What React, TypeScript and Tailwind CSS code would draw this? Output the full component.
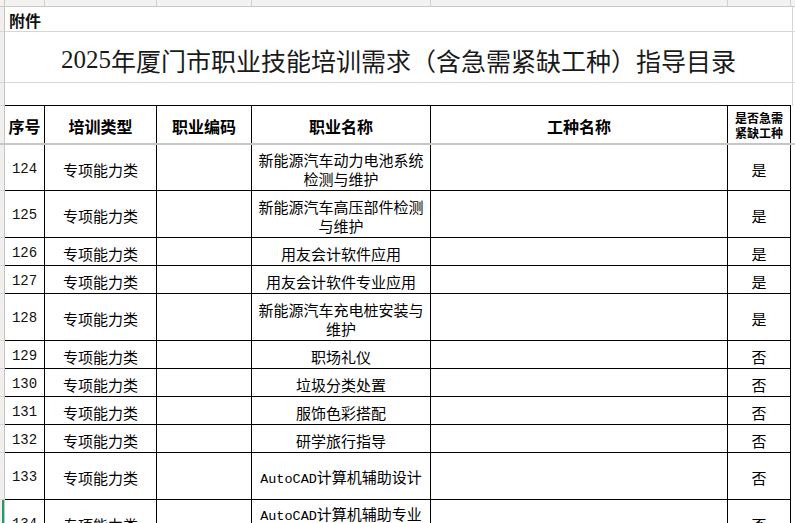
import React from "react";

const COLS = ["w-[40px]", "w-[112px]", "w-[95px]", "w-[179px]", "w-[297px]", "w-[63px]"];
const LETTERS = ["A", "B", "C", "D", "E", "F"];

interface Item {
  no: number;
  name: string[];
  urgent: string;
  h: string;
  selected?: boolean;
}

const items: Item[] = [
  { no: 124, name: ["新能源汽车动力电池系统", "检测与维护"], urgent: "是", h: "h-[46px]" },
  { no: 125, name: ["新能源汽车高压部件检测", "与维护"], urgent: "是", h: "h-[47px]" },
  { no: 126, name: ["用友会计软件应用"], urgent: "是", h: "h-[28px]" },
  { no: 127, name: ["用友会计软件专业应用"], urgent: "是", h: "h-[28px]" },
  { no: 128, name: ["新能源汽车充电桩安装与", "维护"], urgent: "是", h: "h-[47px]" },
  { no: 129, name: ["职场礼仪"], urgent: "否", h: "h-[28px]" },
  { no: 130, name: ["垃圾分类处置"], urgent: "否", h: "h-[28px]" },
  { no: 131, name: ["服饰色彩搭配"], urgent: "否", h: "h-[28px]" },
  { no: 132, name: ["研学旅行指导"], urgent: "否", h: "h-[28px]" },
  { no: 133, name: ["AutoCAD计算机辅助设计"], urgent: "否", h: "h-[47px]" },
  { no: 134, name: ["AutoCAD计算机辅助专业", "设计"], urgent: "否", h: "h-[47px]", selected: true },
];

// latin runs get the narrow mono face, like the sheet's half-width glyphs
function Mixed({ text }: { text: string }) {
  const parts = text.split(/([A-Za-z0-9]+)/).filter(Boolean);
  return (
    <>
      {parts.map((p, i) =>
        /^[A-Za-z0-9]+$/.test(p) ? (
          <span key={i} className="font-['Liberation_Mono',monospace] text-[13.5px]">
            {p}
          </span>
        ) : (
          <span key={i}>{p}</span>
        )
      )}
    </>
  );
}

function Strip({ selected, className = "" }: { selected?: boolean; className?: string }) {
  return (
    <div
      className={`flex w-[5px] shrink-0 justify-end border-r border-[#c4c4c4] bg-[#f1f0ee] ${className}`}
    >
      {selected && <div className="h-full w-[2px] bg-[#1f9d66]" />}
    </div>
  );
}

export default function App() {
  return (
    <div className="h-[523px] w-[795px] overflow-hidden bg-white font-['Noto_Sans_CJK_SC',sans-serif] text-black">
      {/* column headers, mostly scrolled away */}
      <div className="flex h-[7px] overflow-hidden border-b border-[#c9c9c9] bg-[#f3f2f0]">
        <div className="w-[5px] shrink-0 border-r border-[#c9c9c9]" />
        {COLS.map((c, i) => (
          <div
            key={i}
            className={`${c} flex shrink-0 justify-center overflow-hidden border-r border-[#cfcfcf]`}
          >
            <span className="-mt-[9px] font-['Liberation_Sans',sans-serif] text-[11px] leading-[11px] text-[#666]">
              {LETTERS[i]}
            </span>
          </div>
        ))}
        <div className="flex-1" />
      </div>

      {/* 附件 */}
      <div className="flex h-[25px]">
        <Strip className="border-b border-b-[#d6d6d6]" />
        <div className="flex w-[788px] shrink-0 items-end border-r border-b border-[#d6d6d6] pb-[2px] pl-[4px] text-[16px] font-bold leading-[18px] text-[#111]">
          附件
        </div>
        <div className="flex-1 border-b border-[#d6d6d6]" />
      </div>

      {/* title */}
      <div className="flex h-[51px]">
        <Strip className="border-b border-b-[#d6d6d6]" />
        <div className="flex w-[788px] shrink-0 items-center justify-center border-r border-b border-[#d6d6d6] pt-[5px] text-[25px] leading-[28px] text-[#1a1a1a]">
          <span className="font-['Liberation_Serif',serif]">2025</span>
          <span>年厦门市职业技能培训需求（含急需紧缺工种）指导目录</span>
        </div>
        <div className="flex-1 border-b border-[#d6d6d6]" />
      </div>

      {/* empty row */}
      <div className="flex h-[23px]">
        <Strip className="border-b border-b-[#d6d6d6]" />
        <div className="w-[786px] shrink-0 border-b border-black" />
        <div className="w-[2px] shrink-0 border-r border-[#d6d6d6]" />
        <div className="flex-1" />
      </div>

      {/* table header */}
      <div className="flex h-[39px] border-b-2 border-[#c6c6c6]">
        <Strip />
        {["序号", "培训类型", "职业编码", "职业名称", "工种名称"].map((t, i) => (
          <div
            key={t}
            className={`${COLS[i]} flex shrink-0 items-center justify-center border-r border-black pt-[2px] text-[16px] font-bold leading-[18px]`}
          >
            {t}
          </div>
        ))}
        <div
          className={`${COLS[5]} flex shrink-0 flex-col items-center justify-center border-r border-black pt-[1px] text-[12px] font-bold leading-[15px]`}
        >
          <span>是否急需</span>
          <span>紧缺工种</span>
        </div>
        <div className="flex-1" />
      </div>

      {/* data rows */}
      {items.map((it) => (
        <div key={it.no} className={`flex ${it.h}`}>
          <Strip selected={it.selected} className="border-b border-b-[#d6d6d6]" />
          <div
            className={`${COLS[0]} flex shrink-0 items-center justify-center border-r border-b border-black pt-[3px] font-['Liberation_Mono',monospace] text-[14px] leading-[19px] text-[#111]`}
          >
            {it.no}
          </div>
          <div
            className={`${COLS[1]} flex shrink-0 items-center justify-center border-r border-b border-black pt-[3px] text-[15px] leading-[19px]`}
          >
            专项能力类
          </div>
          <div className={`${COLS[2]} shrink-0 border-r border-b border-black`} />
          <div
            className={`${COLS[3]} flex shrink-0 flex-col items-center justify-center border-r border-b border-black pt-[3px] text-center text-[15px] leading-[19px] whitespace-nowrap`}
          >
            {it.name.map((l) => (
              <span key={l}>
                <Mixed text={l} />
              </span>
            ))}
          </div>
          <div className={`${COLS[4]} shrink-0 border-r border-b border-black`} />
          <div
            className={`${COLS[5]} flex shrink-0 items-center justify-center border-r border-b border-black pt-[3px] text-[15px] leading-[19px]`}
          >
            {it.urgent}
          </div>
          <div className="flex-1" />
        </div>
      ))}
    </div>
  );
}
